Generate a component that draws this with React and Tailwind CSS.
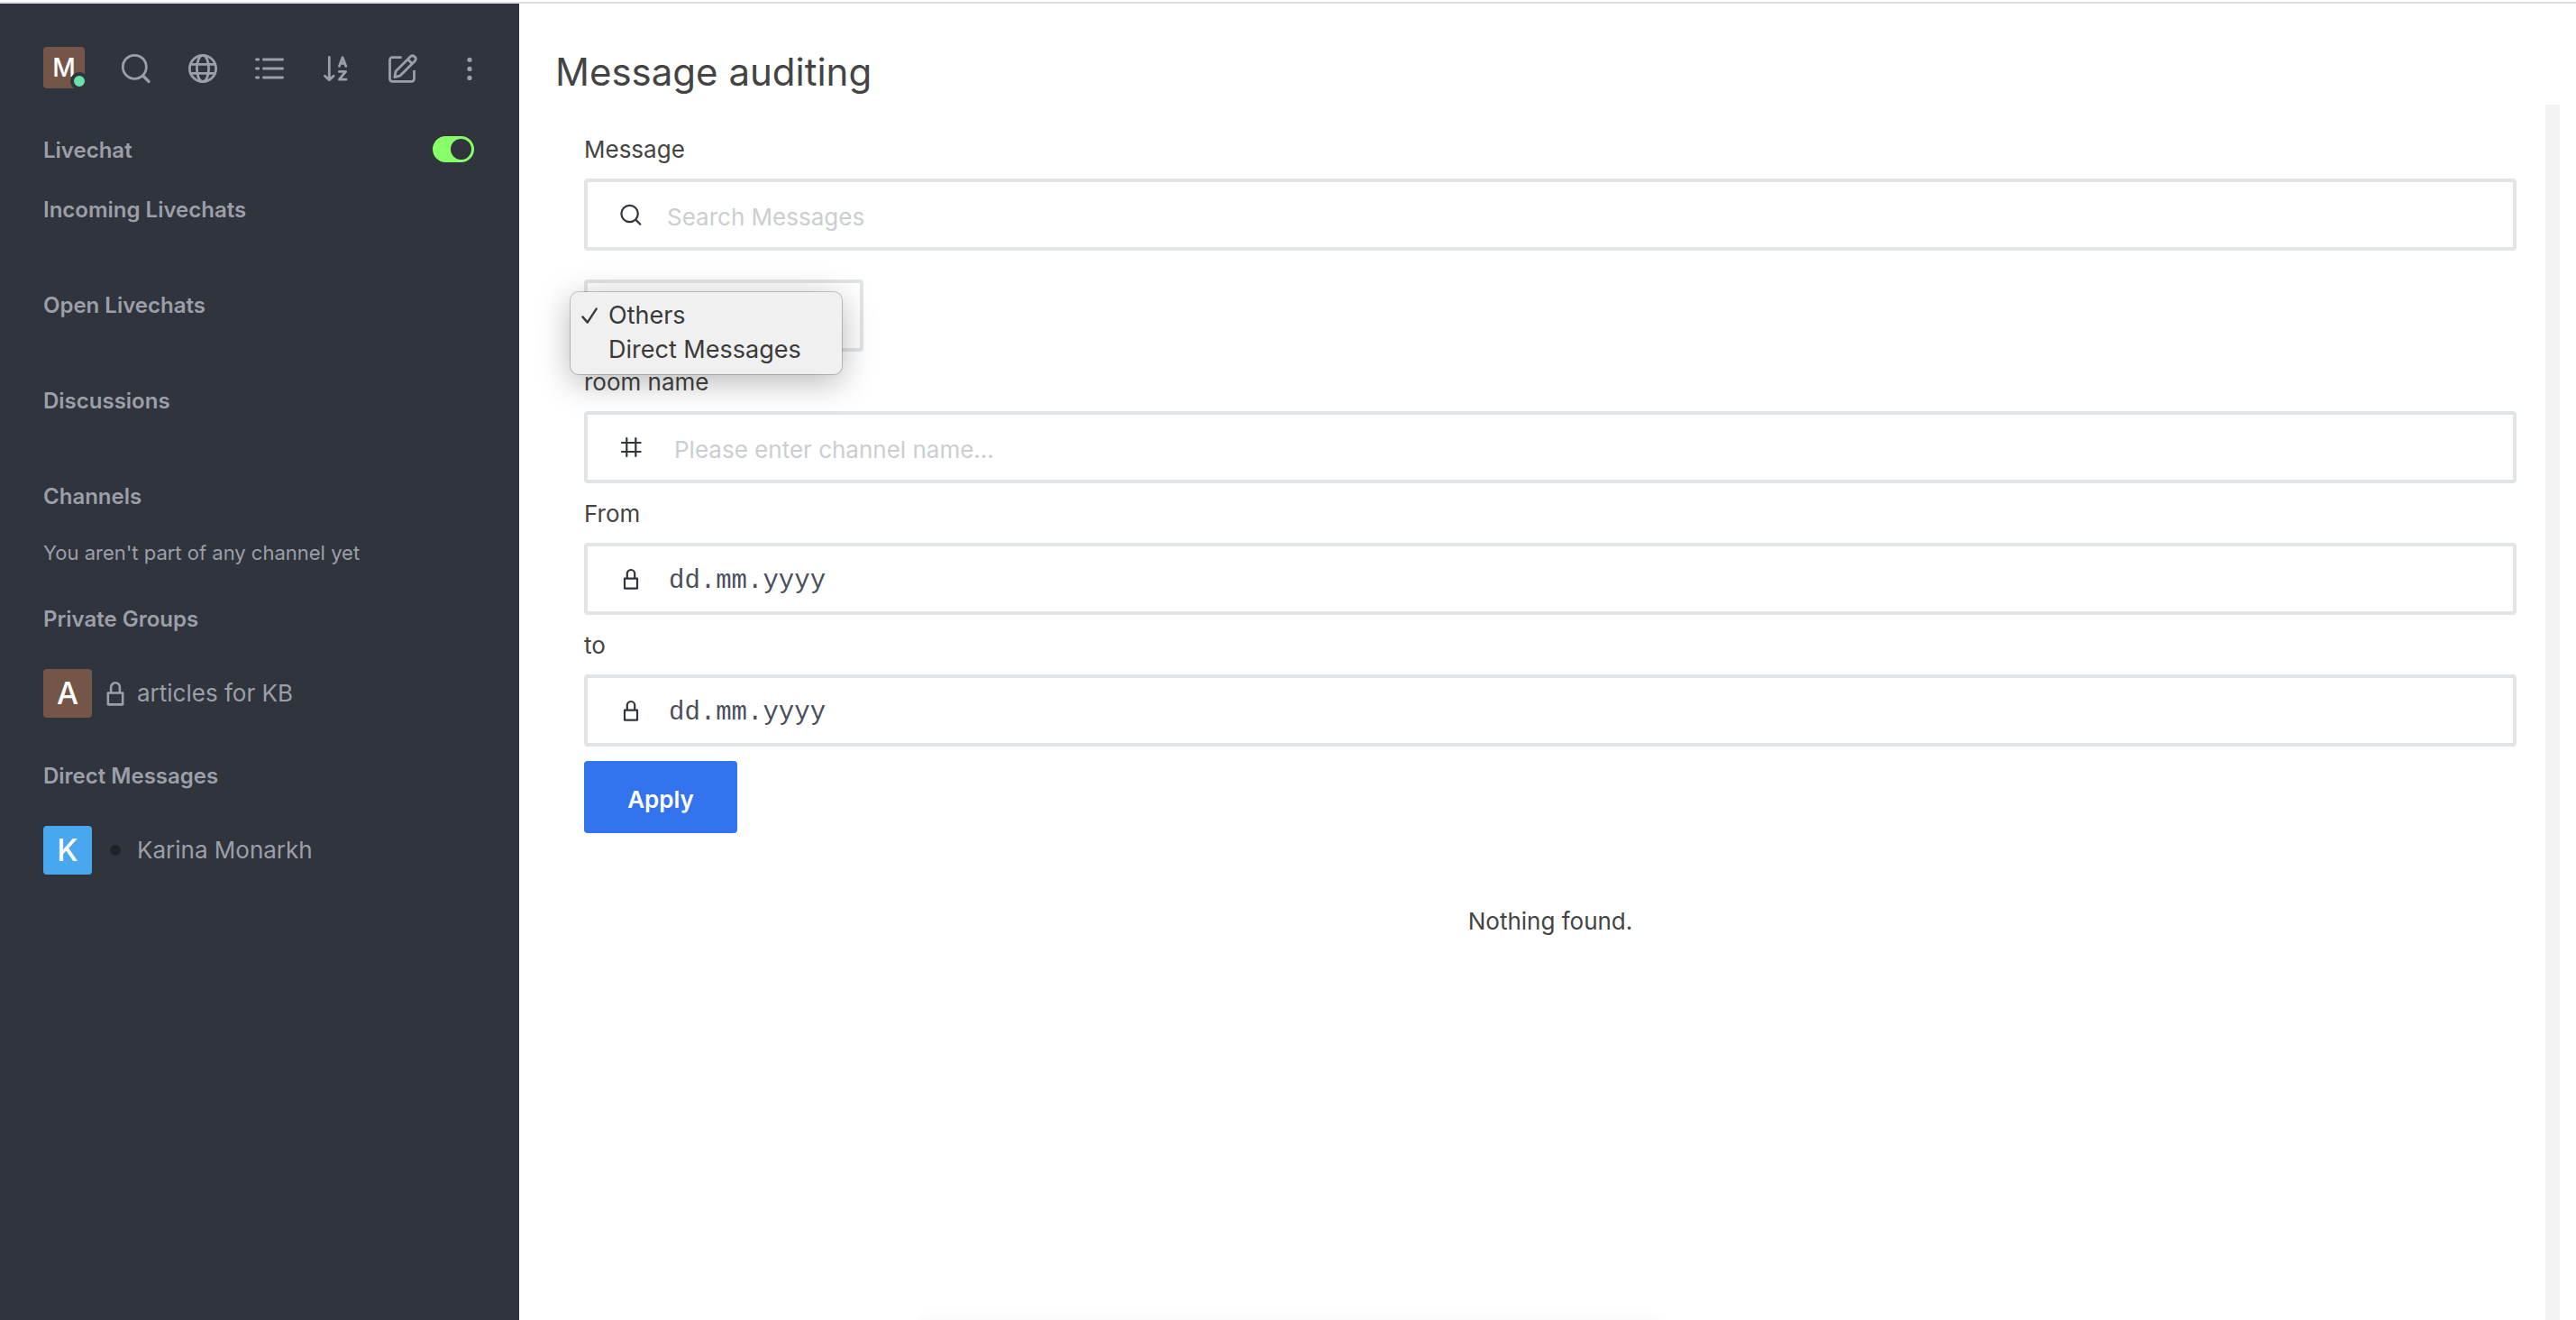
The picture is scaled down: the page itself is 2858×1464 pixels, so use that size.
import React from "react";

function Icon({ size, width, children }) {
  return (
    <svg
      width={size}
      height={size}
      viewBox={width === "bold" ? "0 0 24 24" : "0 0 40 40"}
      fill="none"
      stroke="currentColor"
      strokeWidth={width === "bold" ? 2.2 : 2.8}
      strokeLinecap="round"
      strokeLinejoin="round"
      aria-hidden="true"
      className="block shrink-0"
    >
      {children}
    </svg>
  );
}

const LockIcon = ({ size = 24 }) => (
  <Icon size={size} width="bold">
    <path d="M5 11.6h14v11H5zM7.8 11.4V6.2a4.2 4.2 0 0 1 8.4 0v5.2" />
  </Icon>
);

const SearchIcon = () => (
  <Icon size={24} width="bold">
    <circle cx="10.6" cy="11" r="9.2" />
    <path d="m18 18.4 4.3 4.3" />
  </Icon>
);

const HashIcon = () => (
  <Icon size={24} width="bold">
    <path d="M7.3 2v20M17.3 2v20M2 7h20.6M2 17h20.6" />
  </Icon>
);

const toolbar = [
  {
    label: "Search",
    icon: (
      <>
        <circle cx="18.3" cy="18.3" r="13" />
        <path strokeWidth="3.4" d="m28.6 29 5.4 5.4" />
      </>
    ),
  },
  {
    label: "Directory",
    icon: (
      <>
        <circle cx="20" cy="20" r="14.6" />
        <ellipse cx="20" cy="20" rx="6.6" ry="14.6" />
        <path d="M6.4 15.4h27.2M6.4 25.4h27.2" />
      </>
    ),
  },
  {
    label: "View mode",
    icon: <path d="M5.4 10h2.4M5.4 20h2.4M5.4 30h2.4M13.4 10h21.2M13.4 20h21.2M13.4 30h21.2" />,
  },
  {
    label: "Sort",
    icon: (
      <path d="M12.3 7.5v25M7.5 28.2l4.8 4.6 4.8-4.6M23.4 17.4l3.7-9.6 3.7 9.6M24.8 14.4h4.6M23.4 23.4h7.2l-7.2 8.8h7.6" />
    ),
  },
  {
    label: "Create new",
    icon: (
      <>
        <path
          strokeLinecap="butt"
          d="M18.7 7.6H8.3a2.8 2.8 0 0 0-2.8 2.8v21.2a2.8 2.8 0 0 0 2.8 2.8h21.4a2.8 2.8 0 0 0 2.8-2.8V22"
        />
        <path d="M10.8 29.6l1.3-6.6L28.6 6.6a3.5 3.5 0 0 1 4.9 4.9L17.2 27.8zM25.4 9.8l4.8 4.8" />
      </>
    ),
  },
  {
    label: "More options",
    icon: (
      <g fill="currentColor" stroke="none">
        <circle cx="20" cy="10.3" r="2.6" />
        <circle cx="20" cy="20.4" r="2.6" />
        <circle cx="20" cy="30.4" r="2.6" />
      </g>
    ),
  },
];

const Heading = ({ children }) => (
  <h2 className="text-[24px] leading-8 font-semibold">{children}</h2>
);

function Room({ letter, color, marker, name }) {
  return (
    <a href="#room" className="flex items-center">
      <span
        className={`flex size-[54px] items-center justify-center rounded text-[34px] leading-none font-medium text-white ${color}`}
      >
        {letter}
      </span>
      <span className="ml-3 flex w-7 justify-center">{marker}</span>
      <span className="ml-2.5 text-[26px] leading-9">{name}</span>
    </a>
  );
}

function Sidebar() {
  return (
    <aside className="w-[576px] shrink-0 bg-[#2f343d] px-12 pt-12 text-[#9c9fa8]">
      <div className="flex items-center">
        <button
          type="button"
          aria-label="Profile"
          className="relative mr-[37px] flex size-[46px] shrink-0 items-center justify-center rounded bg-[#745649] text-[28px] leading-none font-medium text-white"
        >
          M
          <span className="absolute -right-1 -bottom-0.5 size-5 rounded-full border-4 border-[#2f343d] bg-[#6be0ad]" />
        </button>
        <div className="-mr-5 flex gap-[34px] pt-0.5">
          {toolbar.map((t) => (
            <button key={t.label} type="button" aria-label={t.label}>
              <Icon size={40}>{t.icon}</Icon>
            </button>
          ))}
        </div>
      </div>

      <div className="mt-[53px] flex items-start justify-between pr-0.5">
        <label htmlFor="livechat" className="text-[24px] leading-8 font-semibold">
          Livechat
        </label>
        <span className="relative flex h-[29px]">
          <input
            id="livechat"
            type="checkbox"
            role="switch"
            defaultChecked
            className="h-[29px] w-[46px] appearance-none rounded-full bg-[#6c727a] checked:bg-[#88ff68]"
          />
          <span className="pointer-events-none absolute top-[3px] right-[3px] size-[23px] rounded-full bg-[#2f343d]" />
        </span>
      </div>

      <nav className="mt-[34px]" aria-label="Rooms">
        {["Incoming Livechats", "Open Livechats", "Discussions"].map((h) => (
          <section key={h} className="pb-[74px]">
            <Heading>{h}</Heading>
          </section>
        ))}
        <section className="pb-[42px]">
          <Heading>Channels</Heading>
          <p className="mt-[30px] text-[22px] leading-8">You aren't part of any channel yet</p>
        </section>
        <section className="flex flex-col gap-[39px] pb-[49px]">
          <Heading>Private Groups</Heading>
          <Room letter="A" color="bg-[#745649]" marker={<LockIcon size={28} />} name="articles for KB" />
        </section>
        <section className="flex flex-col gap-[39px]">
          <Heading>Direct Messages</Heading>
          <Room
            letter="K"
            color="bg-[#48a7ee]"
            marker={<span className="size-3 rounded-full bg-[#1f2329]" />}
            name="Karina Monarkh"
          />
        </section>
      </nav>
    </aside>
  );
}

function Field({ id, label, icon, placeholder, inputClass }) {
  return (
    <div>
      <label htmlFor={id} className="block pt-4 pb-3.5 text-[26px] leading-9">
        {label}
      </label>
      <div className="flex h-20 items-center rounded border-4 border-[#e1e5e8] bg-white pl-9 text-[#2f343d]">
        {icon}
        <input
          id={id}
          type="text"
          placeholder={placeholder}
          className={`h-full min-w-0 flex-1 bg-transparent pt-1 outline-none ${inputClass}`}
        />
      </div>
    </div>
  );
}

const dateInput =
  "pl-[30px] font-['Liberation_Mono',monospace] text-[29px] placeholder:text-[#4a505b]";

export default function App() {
  return (
    <div className="relative flex min-h-screen flex-col overflow-hidden bg-white font-[Inter,sans-serif] text-[#444444]">
      <div className="mt-0.5 h-0.5 bg-[#dcdde4]" />
      <div className="flex flex-1">
        <Sidebar />
        <main className="flex min-w-0 flex-1 flex-col">
          <header className="px-10 pt-13 pb-3">
            <h1 className="text-[42px] leading-12">Message auditing</h1>
          </header>
          <div className="mr-[18px] flex-1 border-r-16 border-[#f3f3f1] pt-4 pr-8 pl-[72px]">
            <form onSubmit={(e) => e.preventDefault()}>
              <Field
                id="message"
                label="Message"
                icon={<SearchIcon />}
                placeholder="Search Messages"
                inputClass="pl-7 text-[26px] placeholder:text-[#cbced1]"
              />
              <div className="relative mt-8 w-[310px]">
                <select
                  aria-label="Room type"
                  className="block h-20 w-full appearance-none rounded border-4 border-[#e1e5e8] bg-white pl-9 text-[26px]"
                >
                  <option>Others</option>
                  <option>Direct Messages</option>
                </select>
                <ul
                  role="listbox"
                  aria-label="Room type options"
                  className="absolute top-[13px] -left-4 w-[303px] rounded-[10px] border border-black/20 bg-[#f0f0f0] bg-clip-padding pt-[7px] pb-2 text-[27px] leading-[38px] text-[#3a3a3a] shadow-[0_8px_36px_rgba(0,0,0,0.28)]"
                >
                  <li role="option" aria-selected="true" className="flex items-center pl-3">
                    <svg width="18" height="18" viewBox="0 0 18 18" fill="none" stroke="currentColor" strokeWidth="2.4" strokeLinecap="round" strokeLinejoin="round" className="mr-3">
                      <path d="M1.4 10.4 6.8 16.6 16.6 1.6" />
                    </svg>
                    Others
                  </li>
                  <li role="option" aria-selected="false" className="pl-[42px]">
                    Direct Messages
                  </li>
                </ul>
              </div>
              <Field
                id="room"
                label="room name"
                icon={<HashIcon />}
                placeholder="Please enter channel name..."
                inputClass="pl-9 text-[26px] placeholder:text-[#cbced1]"
              />
              <Field id="from" label="From" icon={<LockIcon />} placeholder="dd.mm.yyyy" inputClass={dateInput} />
              <Field id="to" label="to" icon={<LockIcon />} placeholder="dd.mm.yyyy" inputClass={dateInput} />
              <button
                type="submit"
                className="mt-4 block h-20 w-[170px] rounded bg-[#3374ee] pt-1 text-[26px] font-semibold text-white"
              >
                Apply
              </button>
            </form>
            <p className="mt-20 text-center text-[26px] leading-9">Nothing found.</p>
          </div>
        </main>
      </div>
      <div className="pointer-events-none absolute -bottom-4 left-1/2 h-4 w-[820px] -translate-x-1/2 rounded-full shadow-[0_0_16px_rgba(0,0,0,0.05)]" />
    </div>
  );
}
